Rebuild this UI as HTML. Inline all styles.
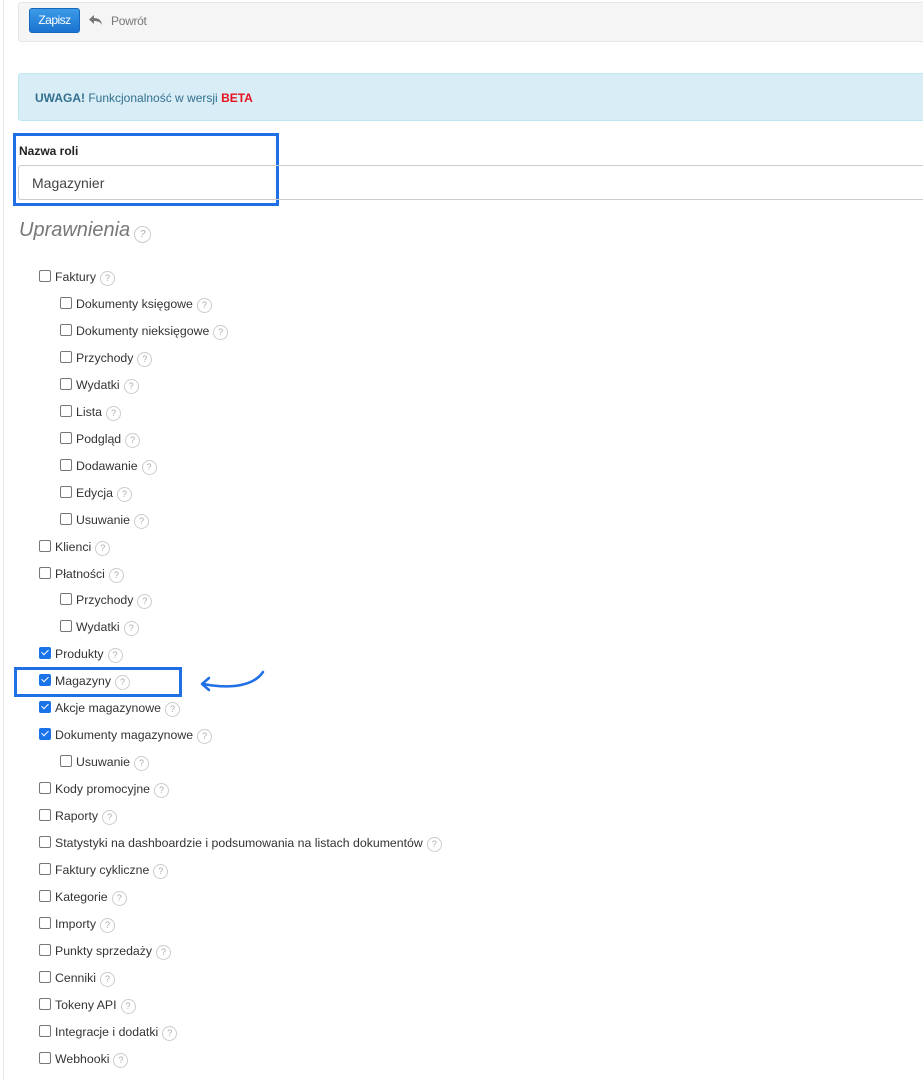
<!DOCTYPE html>
<html><head><meta charset="utf-8"><style>
body{margin:0;width:923px;height:1080px;background:#fff;font-family:"Liberation Sans",sans-serif;position:relative;overflow:hidden;color:#333}
.lb{position:absolute;left:3px;top:0;width:1px;height:1080px;background:#e3e8ee}
.tb{position:absolute;left:18px;top:2px;width:910px;height:38px;background:#f5f5f5;border:1px solid #e5e5e5;border-radius:3px}
.btn{position:absolute;left:29px;top:8px;width:51px;height:25px;border-radius:3px;background:linear-gradient(#3c9be8,#1a73d1);border:1px solid #1767bd;box-sizing:border-box;color:#fff;font-size:12px;line-height:23px;text-align:center;letter-spacing:-0.5px}
.back{position:absolute;left:111px;top:14px;font-size:12px;color:#777;letter-spacing:-0.3px}
.al{position:absolute;left:18px;top:73px;width:910px;height:48px;background:#d9edf7;border:1px solid #bce8f1;border-radius:3px;box-sizing:border-box;font-size:12px;color:#31708f;line-height:48px;padding-left:16px}
.hb{position:absolute;left:13px;top:133px;width:266px;height:73px;border:3px solid #1f6fe5;box-sizing:border-box}
.lbl{position:absolute;left:19px;top:144px;font-weight:bold;font-size:12px;color:#222}
.inp{position:absolute;left:18px;top:165px;width:910px;height:35px;border:1px solid #ccc;border-radius:3px;box-sizing:border-box;font-size:14px;line-height:34px;padding-left:13px;color:#444}
.h{position:absolute;left:19px;top:219px;font-size:20px;font-style:italic;color:#777}
.it{position:absolute;font-size:12.3px;color:#333;height:16px;line-height:16px;white-space:nowrap}
.cb{display:inline-block;width:12px;height:12px;border:1px solid #777;border-radius:2px;vertical-align:-1px;margin-right:4px;box-sizing:border-box;background:#fff}
.ck{background:#1a73e8;border-color:#1a73e8;position:relative}
.ck:after{content:"";position:absolute;left:3px;top:0px;width:3px;height:6px;border:solid #fff;border-width:0 1.5px 1.5px 0;transform:rotate(45deg)}
.q{display:inline-block;width:13px;height:13px;border:1px solid #ccc;border-radius:50%;font-size:9px;line-height:13px;text-align:center;color:#aaa;margin-left:4px;vertical-align:0px}
.q2{width:15px;height:15px;line-height:15px;font-size:10px;vertical-align:-1px}
.mb{position:absolute;left:14px;top:667px;width:168px;height:30px;border:3px solid #1f6fe5;box-sizing:border-box}
</style></head><body>
<div class="lb"></div>
<div class="tb"></div>
<div class="btn">Zapisz</div>
<svg style="position:absolute;left:88px;top:14px" width="16" height="13" viewBox="0 0 16 13"><path d="M6 1 L1 5.5 L6 10 V7 C10 7 12.5 8 14 11 C13.5 6.5 11 4 6 4 Z" fill="#777"/></svg>
<div class="back">Powrót</div>
<div class="al"><b>UWAGA!</b> Funkcjonalność w wersji <b style="color:#e8101c">BETA</b></div>
<div class="hb"></div>
<div class="lbl">Nazwa roli</div>
<div class="inp">Magazynier</div>
<div class="h">Uprawnienia<span class="q q2">?</span></div>
<div class="mb"></div>
<svg style="position:absolute;left:195px;top:668px" width="75" height="30" viewBox="0 0 75 30"><path d="M68 4 C60 16 40 22 8 16" fill="none" stroke="#1f6fe5" stroke-width="2.5" stroke-linecap="round"/><path d="M14 10 L7 16 L14 22" fill="none" stroke="#1f6fe5" stroke-width="2.5" stroke-linecap="round" stroke-linejoin="round"/></svg>
<div id="l"></div>
<script>
var items=[[1,"Faktury"],[2,"Dokumenty księgowe"],[2,"Dokumenty nieksięgowe"],[2,"Przychody"],[2,"Wydatki"],[2,"Lista"],[2,"Podgląd"],[2,"Dodawanie"],[2,"Edycja"],[2,"Usuwanie"],[1,"Klienci"],[1,"Płatności"],[2,"Przychody"],[2,"Wydatki"],[1,"Produkty",1],[1,"Magazyny",1],[1,"Akcje magazynowe",1],[1,"Dokumenty magazynowe",1],[2,"Usuwanie"],[1,"Kody promocyjne"],[1,"Raporty"],[1,"Statystyki na dashboardzie i podsumowania na listach dokumentów"],[1,"Faktury cykliczne"],[1,"Kategorie"],[1,"Importy"],[1,"Punkty sprzedaży"],[1,"Cenniki"],[1,"Tokeny API"],[1,"Integracje i dodatki"],[1,"Webhooki"]];
var h="";items.forEach(function(a,i){var y=269+i*26.95;h+='<div class="it" style="left:'+(a[0]==1?39:60)+'px;top:'+y.toFixed(1)+'px"><span class="cb'+(a[2]?' ck':'')+'"></span>'+a[1]+'<span class="q">?</span></div>';});
document.getElementById("l").innerHTML=h;
</script>
</body></html>
